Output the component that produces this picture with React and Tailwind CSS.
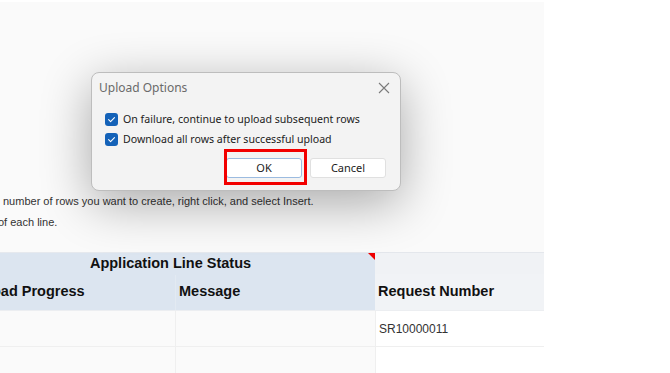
import React from 'react';

function Check() {
  return (
    <span className="w-[13px] h-[13px] rounded-[3px] bg-[#1462b8] flex items-center justify-center shrink-0">
      <svg width="9" height="9" viewBox="0 0 10 10" fill="none">
        <path d="M1.8 5.2 L4 7.3 L8.3 2.8" stroke="white" strokeWidth="1.2" strokeLinecap="round" strokeLinejoin="round" />
      </svg>
    </span>
  );
}

function UploadDialog() {
  return (
    <div className="absolute left-[91px] top-[72px] w-[310px] h-[119px] rounded-[8px] border border-[#bdbdbd] bg-[#f3f3f3] shadow-[0_12px_50px_rgba(0,0,0,0.33)] font-['Noto_Sans',sans-serif] flex flex-col">
      <div className="h-[30px] flex items-center justify-between pl-[7px] pr-[10px] text-[12px] text-[#6a6a6a]">
        <span>Upload Options</span>
        <svg width="12" height="12" viewBox="0 0 12 12">
          <path d="M1 1 L11 11 M11 1 L1 11" stroke="#7a7a7a" strokeWidth="1.1" />
        </svg>
      </div>
      <div className="flex flex-col gap-[7px] pl-[13px] pt-[10px] text-[10.6px] text-[#1b1b1b] leading-[13px]">
        <label className="flex items-center gap-[5px]"><Check />On failure, continue to upload subsequent rows</label>
        <label className="flex items-center gap-[5px]"><Check />Download all rows after successful upload</label>
      </div>
      <div className="flex justify-end gap-[8px] pr-[14px] mt-[12px] text-[11px] text-[#1b1b1b]">
        <div className="relative">
          <button className="w-[76px] h-[20px] rounded-[3px] bg-white border border-[#9bbbe0]">OK</button>
          <div className="absolute left-[-2px] top-[-9px] w-[83px] h-[36px] border-[3px] border-[#f20000]" />
        </div>
        <button className="w-[76px] h-[20px] rounded-[3px] bg-white border border-[#e0e0e0]">Cancel</button>
      </div>
    </div>
  );
}

export default function App() {
  return (
    <div className="relative w-[670px] h-[373px] bg-white overflow-hidden font-['Liberation_Sans',Arial,sans-serif]">
      <div className="w-[544px] h-full bg-[#fafafa] border-t-2 border-white flex flex-col">
        <div className="h-[189px]" />
        <p className="ml-[3px] text-[11px] leading-[21px] text-[#333] whitespace-nowrap">number of rows you want to create, right click, and select Insert.</p>
        <p className="ml-[-2px] text-[11px] leading-[21px] text-[#333] whitespace-nowrap">of each line.</p>
        <div className="h-[19px]" />
        <div className="grid grid-cols-[375px_169px] h-[22px]">
          <div className="relative bg-[#dce5f0] flex items-center justify-center text-[14.5px] font-bold text-[#111] pr-[34px] border-t border-[#e6e9ee]">
            Application Line Status
            <span className="absolute right-0 top-0 w-0 h-0 border-t-[7px] border-t-[#e00] border-l-[7px] border-l-transparent" />
          </div>
          <div className="bg-[#f0f2f5] border-t border-[#e4e7ec] border-b border-b-[#e6e8ec]" />
        </div>
        <div className="grid grid-cols-[175px_200px_169px] h-[36px] text-[14.5px] font-bold text-[#111]">
          <div className="bg-[#dce5f0] flex items-center overflow-hidden"><span className="ml-[-8px] whitespace-nowrap">oad Progress</span></div>
          <div className="bg-[#dce5f0] flex items-center pl-[3px] border-l border-[#e3eaf2]">Message</div>
          <div className="bg-[#f1f3f6] flex items-center pl-[3px]">Request Number</div>
        </div>
        <div className="grid grid-cols-[175px_200px_169px] h-[37px] text-[12px] text-[#333] border-t border-[#eceef1]">
          <div className="bg-[#fafafa] border-b border-[#efefef]" />
          <div className="bg-[#fafafa] border-l border-b border-[#efefef]" />
          <div className="bg-white border-l border-b border-[#efefef] flex items-center pl-[3px]">SR10000011</div>
        </div>
        <div className="grid grid-cols-[175px_200px_169px] flex-1">
          <div className="bg-[#fafafa]" />
          <div className="bg-[#fafafa] border-l border-[#efefef]" />
          <div className="bg-white border-l border-[#efefef]" />
        </div>
      </div>
      <UploadDialog />
    </div>
  );
}
